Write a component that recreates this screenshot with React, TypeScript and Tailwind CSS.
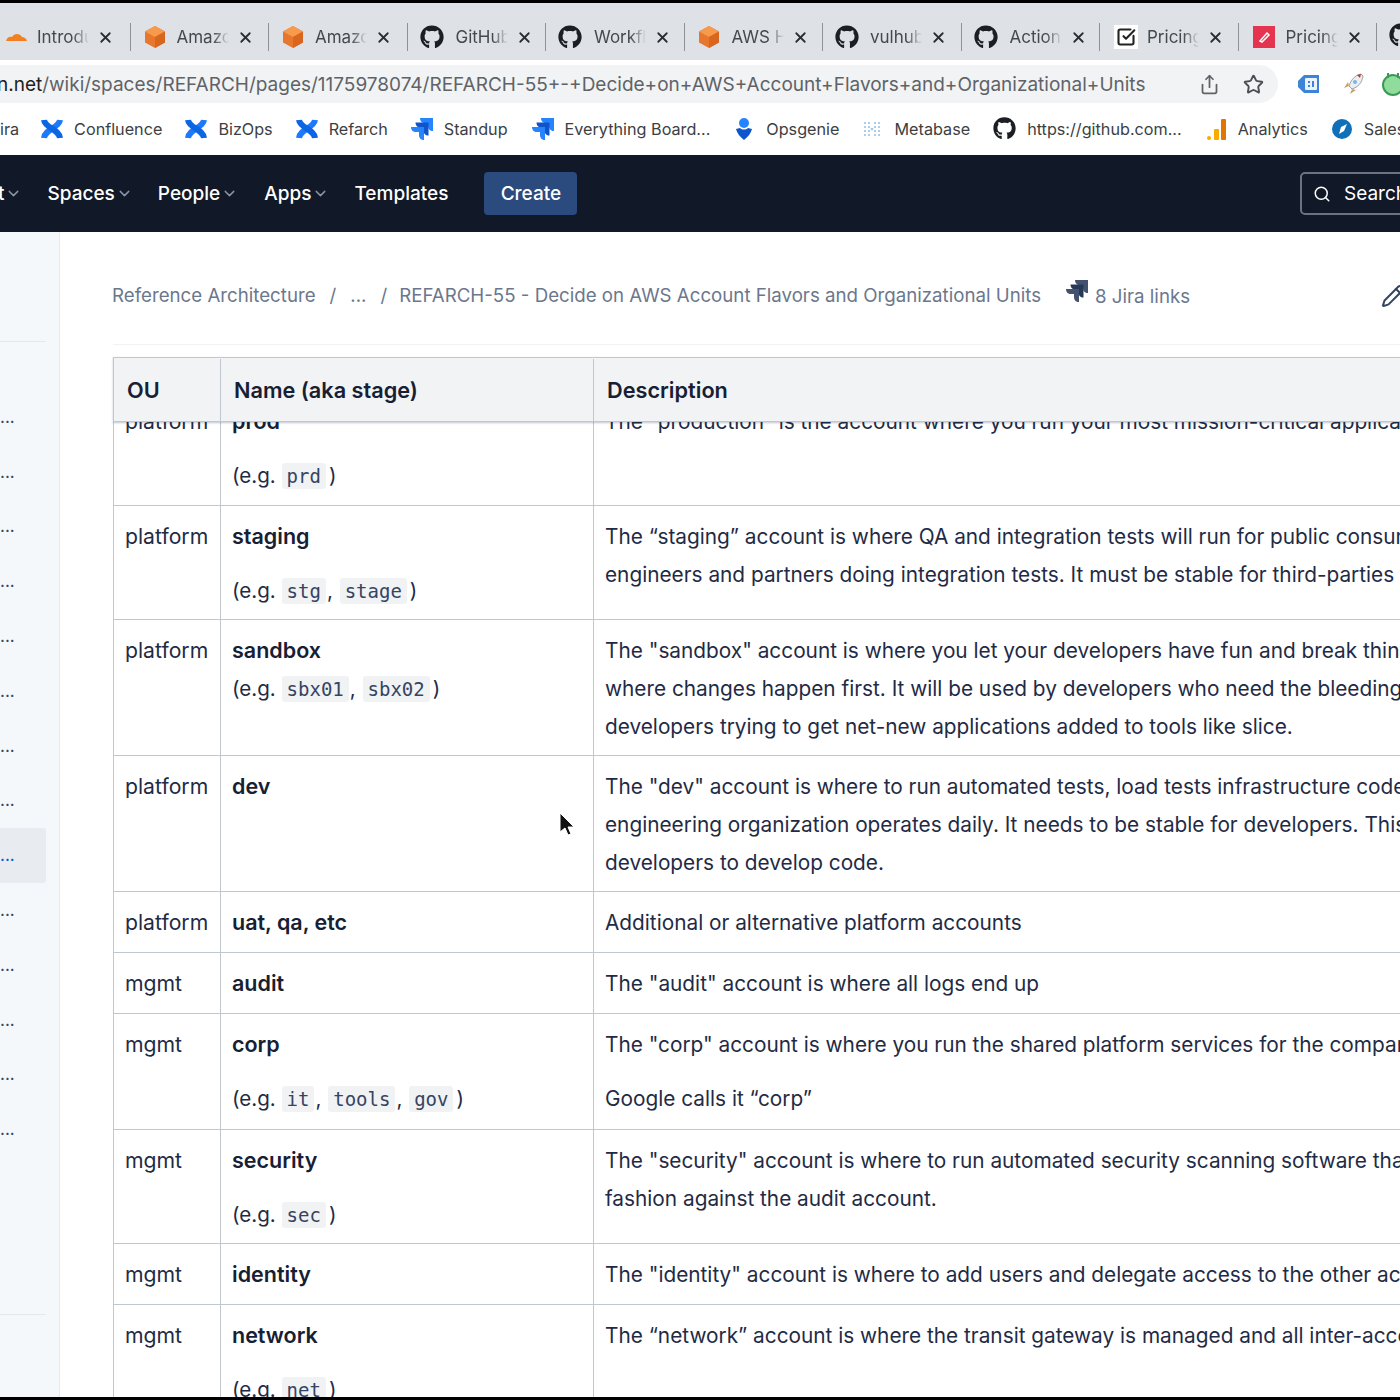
import { FaGithub } from "react-icons/fa";
import { ChevronDown, Search, Share, Star, X, Pencil, SquareCheckBig } from "lucide-react";

const Cube = ({ s = 24 }: { s?: number }) => (
  <svg width={s} height={s} viewBox="0 0 24 24" className="shrink-0">
    <path d="M12 1 22 6.500v11L12 23 2 17.500v-11z" fill="#e8772e" />
    <path d="M12 1 22 6.500 12 12 2 6.500z" fill="#f79a4b" />
    <path d="M12 12 22 6.500v11L12 23z" fill="#d9661f" />
  </svg>
);
const Cloud = () => (
  <svg width="24" height="24" viewBox="0 0 24 24" className="shrink-0">
    <path d="M2 16c1-4 4-5 6-4 2-4 8-4 10 0 2 0 4 1 5 4z" fill="#f38020" />
  </svg>
);
const Conf = () => (
  <svg width="24" height="24" viewBox="0 0 24 24" className="shrink-0" fill="none" strokeWidth="6">
    <path d="M20 3c-1 8-15 9-16 18" stroke="#1d7afc" />
    <path d="M4 3c1 8 15 9 16 18" stroke="#0c66e4" />
  </svg>
);
const Jira = ({ c1 = "#2684ff", c2 = "#0c55cc", s = 24 }: { c1?: string; c2?: string; s?: number }) => {
  const d = "M10 1H23V14C20 14 18 12 18 9V6H15C12 6 10 4 10 1z";
  return (
    <svg width={s} height={s} viewBox="0 0 24 24" className="shrink-0">
      <path d={d} fill={c1} />
      <path d={d} fill={c2} transform="translate(-4.500 4.500)" />
      <path d={d} fill={c1} transform="translate(-9 9)" />
    </svg>
  );
};
const Ops = () => (
  <svg width="24" height="24" viewBox="0 0 24 24" className="shrink-0">
    <circle cx="12" cy="6" r="5" fill="#2684ff" />
    <path d="M4 12l4-1c2 2 6 2 8 0l4 1c-1 4-4 8-8 11-4-3-7-7-8-11z" fill="#0c55cc" />
  </svg>
);
const Meta = () => (
  <svg width="18" height="18" viewBox="0 0 18 18" className="shrink-0" fill="#9cc4e4">
    {[2, 6, 12, 16].map((x) => [3, 7, 11, 15].map((y) => <circle key={`${x}-${y}`} cx={x} cy={y} r="1.100" />))}
    <circle cx="9" cy="9" r="1.300" />
  </svg>
);
const Bars = () => (
  <svg width="22" height="24" viewBox="0 0 22 24" className="shrink-0">
    <circle cx="3" cy="21" r="2" fill="#f9ab00" />
    <rect x="8" y="12" width="5" height="11" rx="1" fill="#f9ab00" />
    <rect x="15" y="2" width="5" height="21" rx="1" fill="#e37400" />
  </svg>
);
const Compass = () => (
  <svg width="22" height="22" viewBox="0 0 22 22" className="shrink-0">
    <circle cx="11" cy="11" r="10" fill="#0f6fb8" />
    <path d="M16 6l-3 7-5 3 2-7z" fill="#fff" />
  </svg>
);
const PricingRed = () => (
  <svg width="22" height="22" viewBox="0 0 22 22" className="ml-[2px] shrink-0">
    <rect width="22" height="22" fill="#e5344f" />
    <path d="M7 15l7-8 2 2-7 7z" fill="none" stroke="#fff" strokeWidth="1.500" />
  </svg>
);
const Gh = () => <FaGithub size={24} color="#1b1f24" className="shrink-0" />;

const tabs: [React.ReactNode, string, string][] = [
  [<Cloud />, "Introducing", "ml-[9px]"],
  [<Cube />, "Amazon", "ml-[10px]"],
  [<Cube />, "Amazon", "ml-[10px]"],
  [<Gh />, "GitHub", "ml-[12px]"],
  [<Gh />, "Workflow", "ml-[12px]"],
  [<Cube />, "AWS Health", "ml-[11px]"],
  [<Gh />, "vulhub", "ml-[11px]"],
  [<Gh />, "Actions", "ml-[12px]"],
  [<span className="ml-[2px] flex h-6 w-6 shrink-0 items-center justify-center bg-white"><SquareCheckBig size={20} color="#222" strokeWidth={2.500} /></span>, "Pricing", "ml-[9px]"],
  [<PricingRed />, "Pricing", "ml-[11px]"],
];

const marks: [React.ReactNode, string, string][] = [
  [<Conf />, "Confluence", "gap-[10px] mr-[22px]"],
  [<Conf />, "BizOps", "gap-[10px] mr-[22px]"],
  [<Conf />, "Refarch", "gap-[10px] mr-[22px]"],
  [<Jira />, "Standup", "gap-[10px] mr-[23px]"],
  [<Jira />, "Everything Board...", "gap-[10px] mr-[22px]"],
  [<Ops />, "Opsgenie", "gap-[10px] mr-[24px]"],
  [<Meta />, "Metabase", "gap-[13px] mr-[23px]"],
  [<FaGithub size={23} color="#1b1f24" className="shrink-0" />, "https://github.com...", "gap-[11px] mr-[24px]"],
  [<Bars />, "Analytics", "gap-[10px] mr-[23px]"],
  [<Compass />, "Salesforce", "gap-[11px]"],
];

const sideItems = Array.from({ length: 14 }, (_, i) => i);

const Code = ({ children }: { children: string }) => (
  <code className="rounded-[3px] bg-[#f1f2f4] px-[5px] py-[2px] font-['DejaVu_Sans_Mono','Liberation_Mono',monospace] text-[19px] text-[#344563]">
    {children}
  </code>
);

function Eg({ items, className = "" }: { items: string[]; className?: string }) {
  return (
    <div className={`whitespace-nowrap text-[20.600px] font-normal leading-[38px] ${className}`}>
      (e.g.{" "}
      {items.map((t, i) => (
        <span key={t}>
          <Code>{t}</Code>
          {i < items.length - 1 ? <span className="mx-[1px]">, </span> : null}
        </span>
      ))}
      <span className="ml-[3px]">)</span>
    </div>
  );
}

type Row = {
  ou: string;
  name: string;
  eg?: string[];
  egGap?: string;
  desc: React.ReactNode[];
  h: string;
  descGap?: string;
};

const rows: Row[] = [
  {
    ou: "platform",
    name: "prod",
    eg: ["prd"],
    egGap: "mt-[17px]",
    h: "h-[115px]",
    desc: ["The “production” is the account where you run your most mission-critical applications and services"],
  },
  {
    ou: "platform",
    name: "staging",
    eg: ["stg", "stage"],
    egGap: "mt-[17px]",
    h: "h-[114px]",
    desc: [
      "The “staging” account is where QA and integration tests will run for public consumption",
      "engineers and partners doing integration tests. It must be stable for third-parties to test against",
    ],
  },
  {
    ou: "platform",
    name: "sandbox",
    eg: ["sbx01", "sbx02"],
    egGap: "mt-[1px]",
    h: "h-[136px]",
    desc: [
      "The \"sandbox\" account is where you let your developers have fun and break things",
      "where changes happen first. It will be used by developers who need the bleeding edge",
      "developers trying to get net-new applications added to tools like slice.",
    ],
  },
  {
    ou: "platform",
    name: "dev",
    h: "h-[136px]",
    desc: [
      "The \"dev\" account is where to run automated tests, load tests infrastructure code",
      "engineering organization operates daily. It needs to be stable for developers. This is where",
      "developers to develop code.",
    ],
  },
  { ou: "platform", name: "uat, qa, etc", h: "h-[61px]", desc: ["Additional or alternative platform accounts"] },
  { ou: "mgmt", name: "audit", h: "h-[61px]", desc: ["The \"audit\" account is where all logs end up"] },
  {
    ou: "mgmt",
    name: "corp",
    eg: ["it", "tools", "gov"],
    egGap: "mt-[17px]",
    h: "h-[116px]",
    descGap: "gap-4",
    desc: ["The \"corp\" account is where you run the shared platform services for the company", "Google calls it “corp”"],
  },
  {
    ou: "mgmt",
    name: "security",
    eg: ["sec"],
    egGap: "mt-[17px]",
    h: "h-[114px]",
    desc: [
      "The \"security\" account is where to run automated security scanning software that",
      "fashion against the audit account.",
    ],
  },
  {
    ou: "mgmt",
    name: "identity",
    h: "h-[61px]",
    desc: ["The \"identity\" account is where to add users and delegate access to the other accounts"],
  },
  {
    ou: "mgmt",
    name: "network",
    eg: ["net"],
    egGap: "mt-[17px]",
    h: "h-[115px]",
    desc: ["The “network” account is where the transit gateway is managed and all inter-account routing"],
  },
];

function NavItem({ label }: { label: string }) {
  return (
    <span className="flex items-center gap-[1px]">
      <span className="pt-[2px]">{label}</span>
      <ChevronDown size={17} color="#8993a4" />
    </span>
  );
}

export default function App() {
  return (
    <div className="relative flex h-[1400px] w-[1400px] flex-col overflow-hidden bg-white font-['Inter','Liberation_Sans',sans-serif]">
      <div className="h-[3px] shrink-0 bg-black" />

      {/* tab strip */}
      <div className="flex h-[57px] shrink-0 items-center bg-[#dee1e6] pt-[11px]">
        <div className="-ml-[8px] flex">
          {tabs.map(([icon, title, gap], i) => (
            <div key={i} className="flex h-[28px] w-[138.500px] shrink-0 items-center border-r border-[#8e9196] pl-[12px]">
              {icon}
              <span className={`${gap} w-[52px] shrink-0 overflow-hidden whitespace-nowrap pt-[2px] text-[17px] text-[#45494e] [mask-image:linear-gradient(to_right,black_70%,transparent)]`}>
                {title}
              </span>
              <X size={17} color="#2b2d30" strokeWidth={2.500} className="ml-[8px] shrink-0" />
            </div>
          ))}
          <div className="pl-[12px]">
            <FaGithub size={24} color="#1b1f24" />
          </div>
        </div>
      </div>

      {/* address row */}
      <div className="flex h-[43px] shrink-0 items-end bg-white">
        <div className="flex h-[38px] w-[1278px] shrink-0 items-center justify-between rounded-r-full bg-[#f1f3f4] pr-[14px]">
          <span className="-ml-[3px] whitespace-nowrap pt-[3px] text-[19px] text-[#5f6368]">
            <span className="text-[#202124]">n.net</span>/wiki/spaces/REFARCH/pages/1175978074/REFARCH-55+-+Decide+on+AWS+Account+Flavors+and+Organizational+Units
          </span>
          <span className="flex items-center gap-[23px]">
            <Share size={21} color="#5f6368" />
            <Star size={21} color="#4b4f54" strokeWidth={2.200} />
          </span>
        </div>
        <div className="flex h-[38px] items-center pl-[19px]">
          <svg width="23" height="20" viewBox="0 0 23 20" className="shrink-0">
            <path d="M7 1h15v18H7L1 13V7z" fill="#3d84d6" />
            <rect x="8" y="4" width="12" height="12" rx="1" fill="#eaf2fb" />
            <path d="M12 7v2M12 11v2M16 7v6" stroke="#3d84d6" strokeWidth="2" />
          </svg>
          <svg width="26" height="26" viewBox="0 0 26 26" className="ml-[19px] shrink-0">
            <path d="M22 3c-6 1-10 6-12 12l3 3c6-2 10-6 11-13z" fill="#eceff1" stroke="#9aa0a6" />
            <path d="M10 15l-5 2 4-6zM13 18l-2 5 6-4z" fill="#c9a26a" />
            <path d="M22 3l-4 1 3 3z" fill="#c0392b" />
            <circle cx="16" cy="11" r="2" fill="#78b7e8" />
          </svg>
          <svg width="24" height="24" viewBox="0 0 24 24" className="ml-[16px] shrink-0">
            <circle cx="12" cy="13" r="10" fill="#8fdc9c" stroke="#3a9a55" strokeWidth="2" />
            <path d="M7 1v5M17 1v5" stroke="#3a9a55" strokeWidth="2" />
          </svg>
        </div>
      </div>

      {/* bookmarks */}
      <div className="flex h-[52px] shrink-0 items-center overflow-hidden whitespace-nowrap bg-white text-[16.200px] text-[#3c4043]">
        <span className="mr-[21px] shrink-0">ira</span>
        {marks.map(([icon, label, cls]) => (
          <span key={label} className={`flex shrink-0 items-center ${cls}`}>
            {icon}
            {label}
          </span>
        ))}
      </div>

      {/* product nav */}
      <div className="flex h-[77px] shrink-0 items-center justify-between bg-[#111827] text-[19px] font-medium text-white">
        <div className="flex items-center">
          <span className="-ml-[2px] mr-[25px] flex items-center gap-[1px]">
            <span className="pt-[2px]">t</span>
            <ChevronDown size={17} color="#8993a4" />
          </span>
          <span className="mr-[25px]"><NavItem label="Spaces" /></span>
          <span className="mr-[26px]"><NavItem label="People" /></span>
          <span className="mr-[25px]"><NavItem label="Apps" /></span>
          <span className="mr-[36px] pt-[2px]">Templates</span>
          <span className="flex h-[43px] w-[93px] items-center justify-center rounded-[4px] bg-[#2b4a7d] pt-[2px]">Create</span>
        </div>
        <div className="-mr-[60px] flex h-[43px] w-[160px] items-center gap-[13px] rounded-[5px] border-2 border-[#6b7280] pl-[11px] font-normal">
          <Search size={18} color="#fff" />
          <span className="pt-[1px]">Search</span>
        </div>
      </div>

      {/* body */}
      <div className="flex min-h-0 flex-1">
        <aside className="w-[60px] shrink-0 border-r border-[#e6e9ee] bg-[#f5f8fb] pr-[13px] pt-[109px]">
          <div className="h-[1px] bg-[#e4e7eb]" />
          <div className="grid auto-rows-[54.800px] pt-[48px]">
            {sideItems.map((i) => (
              <div
                key={i}
                className={`flex items-center rounded-r-[3px] text-[17px] leading-none ${i === 8 ? "bg-[#e8ebef] text-[#0c55cc]" : "text-[#344563]"}`}
              >
                ...
              </div>
            ))}
          </div>
          <div className="mt-[157px] h-[1px] bg-[#e4e7eb]" />
        </aside>

        <main className="min-w-0 flex-1 overflow-hidden pl-[53px]">
          <div className="flex h-[113px] w-[1400px] items-center border-b border-[#f1f2f4] pt-[17px] text-[18.700px] text-[#6b778c]">
            <div className="-ml-[1px] flex items-center whitespace-nowrap">
              <span>Reference Architecture</span>
              <span className="mx-[14px]">/</span>
              <span>...</span>
              <span className="ml-[14px] mr-[12px]">/</span>
              <span>REFARCH-55 - Decide on AWS Account Flavors and Organizational Units</span>
              <span className="ml-[24px] flex items-center gap-[6px]">
                <span className="-translate-y-[5px]">
                  <Jira c1="#42526e" c2="#253858" s={24} />
                </span>
                <span className="pt-[2px]">8 Jira links</span>
              </span>
              <Pencil size={24} color="#344563" className="ml-[191px] shrink-0" />
            </div>
          </div>

          <div className="mt-[12px] w-[1400px] text-[#1f2b45]">
            <div className="relative z-10 grid h-[65px] grid-cols-[106px_373px_1fr] border border-[#c1c7d0] bg-[#f1f3f5] pt-[1px] text-[21.700px] font-semibold text-[#172033] shadow-[0_1px_2px_rgba(9,30,66,0.25)]">
              <div className="flex items-center pl-[13px]">OU</div>
              <div className="flex items-center border-l border-[#c1c7d0] pl-[13px]">Name (aka stage)</div>
              <div className="flex items-center border-l border-[#c1c7d0] pl-[13px]">Description</div>
            </div>
            <div className="-mt-[31px]">
              {rows.map((r) => (
                <div key={r.name} className={`grid grid-cols-[106px_373px_1fr] border-x border-b border-[#c1c7d0] ${r.h}`}>
                  <div className="whitespace-nowrap pl-[11px] pt-[11px] text-[21.200px] leading-[38px]">{r.ou}</div>
                  <div className="border-l border-[#c1c7d0] pl-[11px] pt-[11px]">
                    <div className="whitespace-nowrap text-[21.500px] font-semibold leading-[38px] text-[#172033]">{r.name}</div>
                    {r.eg ? <Eg items={r.eg} className={r.egGap ?? ""} /> : null}
                  </div>
                  <div className={`flex flex-col overflow-hidden border-l border-[#c1c7d0] pl-[11px] pt-[12px] text-[20.800px] ${r.descGap ?? ""}`}>
                    {r.desc.map((line, i) => (
                      <div key={i} className="whitespace-nowrap leading-[38px]">{line}</div>
                    ))}
                  </div>
                </div>
              ))}
            </div>
          </div>
        </main>
      </div>

      <div className="h-[3px] shrink-0 bg-black" />

      {/* mouse pointer */}
      <svg width="16" height="26" viewBox="0 0 16 26" className="absolute left-[558px] top-[812px]">
        <path d="M2 1v19l5-4 3 7 3-1-3-7h6z" fill="#111" stroke="#fff" strokeWidth="1" />
      </svg>
    </div>
  );
}
